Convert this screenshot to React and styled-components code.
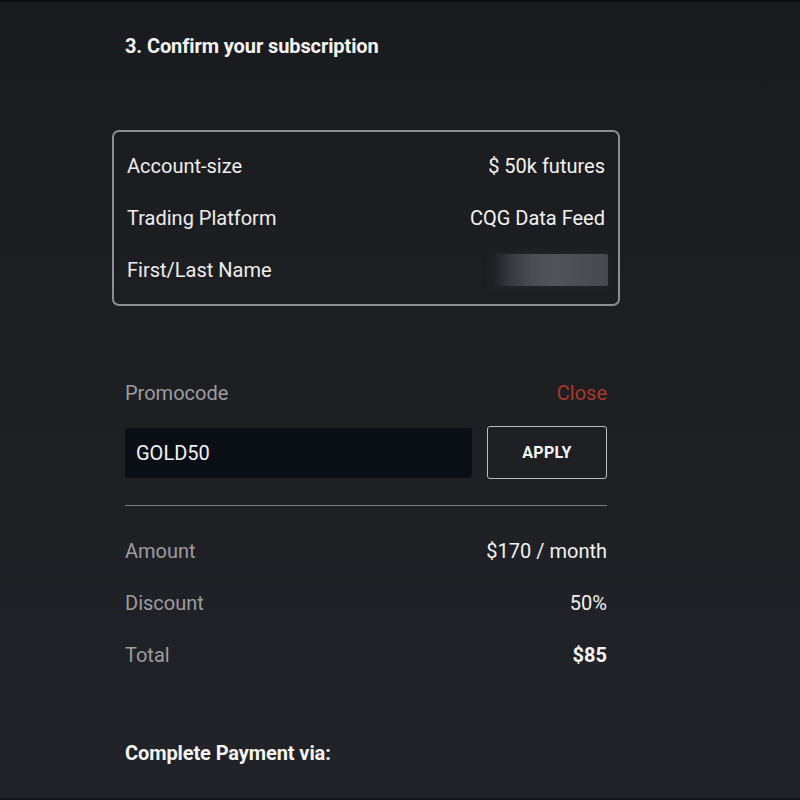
import React from 'react';
import styled, { createGlobalStyle } from 'styled-components';

const GlobalStyle = createGlobalStyle`
    html, body {
        margin: 0;
        padding: 0;
        background: #1c1e22;
    }

    * {
        box-sizing: border-box;
    }
`;

const Page = styled.div`
    width: 800px;
    height: 800px;
    overflow: hidden;
    background: linear-gradient(180deg, #191b1f 0%, #1d1f23 50%, #212328 100%);
    border-top: 2px solid #0c0f13;
    border-bottom: 2px solid #14161a;
    font-family: Roboto, 'Liberation Sans', sans-serif;
    color: #eeeeee;
    padding: 31px 0 0 125px;
`;

const Column = styled.div`
    width: 482px;
    display: flex;
    flex-direction: column;
`;

const Heading = styled.h2`
    margin: 0;
    font-size: 20px;
    line-height: 26px;
    font-weight: 700;
    color: #f4f4f4;
    letter-spacing: -0.1px;
    margin-top: ${p => p.$top || 0}px;
`;

const SummaryCard = styled.div`
    margin: 71px -13px 0;
    border: 2px solid #8b8e93;
    border-radius: 7px;
    padding: 8px 13px;
    display: flex;
    flex-direction: column;
`;

const Row = styled.div`
    height: 52px;
    display: flex;
    align-items: center;
    justify-content: space-between;
    font-size: 20px;
`;

const Label = styled.span`
    color: ${p => (p.$muted ? '#9c9da0' : '#eeeeee')};
`;

const Value = styled.span`
    color: #f2f2f2;
    font-weight: ${p => (p.$bold ? 700 : 400)};
`;

const Redacted = styled.span`
    width: 116px;
    height: 32px;
    margin-right: -3px;
    background: linear-gradient(90deg, rgba(70, 74, 78, 0) 0%, rgba(70, 74, 78, 0.6) 15%, #4a4d51 35%, #505357 55%, #4a4d51 80%, #45484c 100%);
    box-shadow: 0 0 8px 1px rgba(60, 63, 67, 0.3);
    border-radius: 2px;
`;

const PromoHeader = styled.div`
    margin-top: 75px;
    height: 24px;
    display: flex;
    align-items: center;
    justify-content: space-between;
    font-size: 20px;
`;

const CloseLink = styled.span`
    color: #a9392c;
    cursor: pointer;
`;

const PromoForm = styled.div`
    margin-top: 21px;
    display: flex;
    align-items: center;
    gap: 15px;
    height: 53px;
`;

const PromoInput = styled.input`
    flex: 1;
    height: 50px;
    border: none;
    outline: none;
    border-radius: 3px;
    background: #0a0f15;
    color: #f2f2f2;
    font-family: Roboto, 'Liberation Sans', sans-serif;
    font-size: 20px;
    padding: 0 11px;
`;

const ApplyButton = styled.button`
    width: 120px;
    height: 53px;
    border: 1.5px solid #b9bbbe;
    border-radius: 3px;
    background: transparent;
    color: #f6f6f6;
    font-family: Roboto, 'Liberation Sans', sans-serif;
    font-size: 16px;
    font-weight: 700;
    letter-spacing: 0.3px;
`;

const Divider = styled.hr`
    margin: 26px 0 19px;
    border: none;
    border-top: 1.5px solid #7a7c80;
`;

const Totals = styled.div`
    display: flex;
    flex-direction: column;
`;

const summary = [
    ['Account-size', '$ 50k futures'],
    ['Trading Platform', 'CQG Data Feed'],
];

const totals = [
    ['Amount', '$170 / month', false],
    ['Discount', '50%', false],
    ['Total', '$85', true],
];

const App = () => {
    return (
        <Page>
            <GlobalStyle />
            <Column>
                <Heading>3. Confirm your subscription</Heading>

                <SummaryCard>
                    {summary.map(([label, value]) => (
                        <Row key={label}>
                            <Label>{label}</Label>
                            <Value>{value}</Value>
                        </Row>
                    ))}
                    <Row>
                        <Label>First/Last Name</Label>
                        <Redacted />
                    </Row>
                </SummaryCard>

                <PromoHeader>
                    <Label $muted>Promocode</Label>
                    <CloseLink>Close</CloseLink>
                </PromoHeader>
                <PromoForm>
                    <PromoInput defaultValue="GOLD50" />
                    <ApplyButton>APPLY</ApplyButton>
                </PromoForm>

                <Divider />

                <Totals>
                    {totals.map(([label, value, bold]) => (
                        <Row key={label}>
                            <Label $muted>{label}</Label>
                            <Value $bold={bold}>{value}</Value>
                        </Row>
                    ))}
                </Totals>

                <Heading $top={59}>Complete Payment via:</Heading>
            </Column>
        </Page>
    );
}

export default App;
